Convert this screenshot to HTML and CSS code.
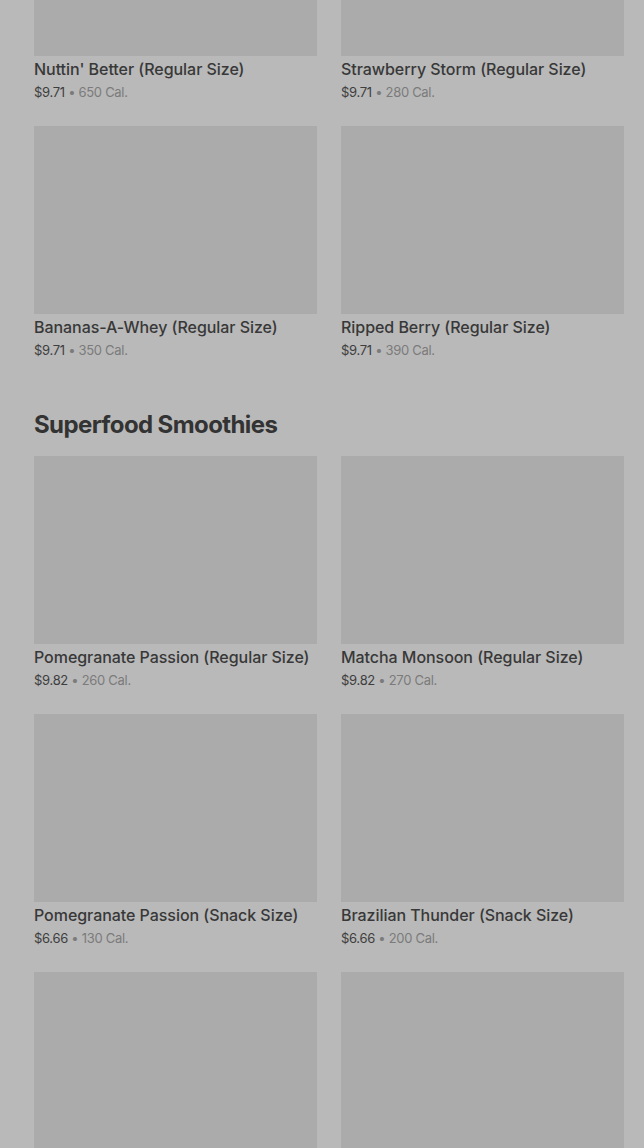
FILE: index.html
```html
<!DOCTYPE html>
<html>
<head>
<meta charset="utf-8">
<link rel="stylesheet" href="styles.css">
</head>
<body>
<main class="menu">
  <section class="section">
    <div class="grid">
      <div class="card"><div class="thumb"></div><div class="title">Nuttin' Better (Regular Size)</div><div class="meta"><span class="price">$9.71</span> • 650 Cal.</div></div>
      <div class="card"><div class="thumb"></div><div class="title">Strawberry Storm (Regular Size)</div><div class="meta"><span class="price">$9.71</span> • 280 Cal.</div></div>
      <div class="card"><div class="thumb"></div><div class="title">Bananas-A-Whey (Regular Size)</div><div class="meta"><span class="price">$9.71</span> • 350 Cal.</div></div>
      <div class="card"><div class="thumb"></div><div class="title">Ripped Berry (Regular Size)</div><div class="meta"><span class="price">$9.71</span> • 390 Cal.</div></div>
    </div>
  </section>
  <section class="section">
    <h2 class="heading">Superfood Smoothies</h2>
    <div class="grid">
      <div class="card"><div class="thumb"></div><div class="title">Pomegranate Passion (Regular Size)</div><div class="meta"><span class="price">$9.82</span> • 260 Cal.</div></div>
      <div class="card"><div class="thumb"></div><div class="title">Matcha Monsoon (Regular Size)</div><div class="meta"><span class="price">$9.82</span> • 270 Cal.</div></div>
      <div class="card"><div class="thumb"></div><div class="title">Pomegranate Passion (Snack Size)</div><div class="meta"><span class="price">$6.66</span> • 130 Cal.</div></div>
      <div class="card"><div class="thumb"></div><div class="title">Brazilian Thunder (Snack Size)</div><div class="meta"><span class="price">$6.66</span> • 200 Cal.</div></div>
      <div class="card card-cut"><div class="thumb"></div></div>
      <div class="card card-cut"><div class="thumb"></div></div>
    </div>
  </section>
</main>
</body>
</html>
```

FILE: styles.css
```css
html, body {
  margin: 0;
  padding: 0;
  background: #b9b9b9;
  height: 1148px;
  overflow: hidden;
}
body {
  font-family: Inter, "Noto Sans", sans-serif;
  color: #3a3a3a;
}
.menu {
  padding: 0 20px 0 34px;
  margin-top: -132px;
}
.grid {
  display: grid;
  grid-template-columns: 283px 283px;
  column-gap: 24px;
  row-gap: 24px;
}
.thumb {
  height: 188px;
  background: #ababab;
}
.card-cut .thumb {
  height: 176px;
}
.title {
  font-size: 16px;
  line-height: 24px;
  margin-top: 1px;
  font-weight: 500;
  color: #383838;
  letter-spacing: -0.05px;
  white-space: nowrap;
}
.meta {
  font-size: 13px;
  line-height: 20px;
  margin-top: 1px;
  color: #7b7b7b;
  letter-spacing: -0.3px;
}
.price {
  color: #3e3e3e;
}
.heading {
  margin: 49px 0 15px;
  font-size: 24px;
  line-height: 32px;
  font-weight: 700;
  color: #333;
  letter-spacing: -0.6px;
}
```
